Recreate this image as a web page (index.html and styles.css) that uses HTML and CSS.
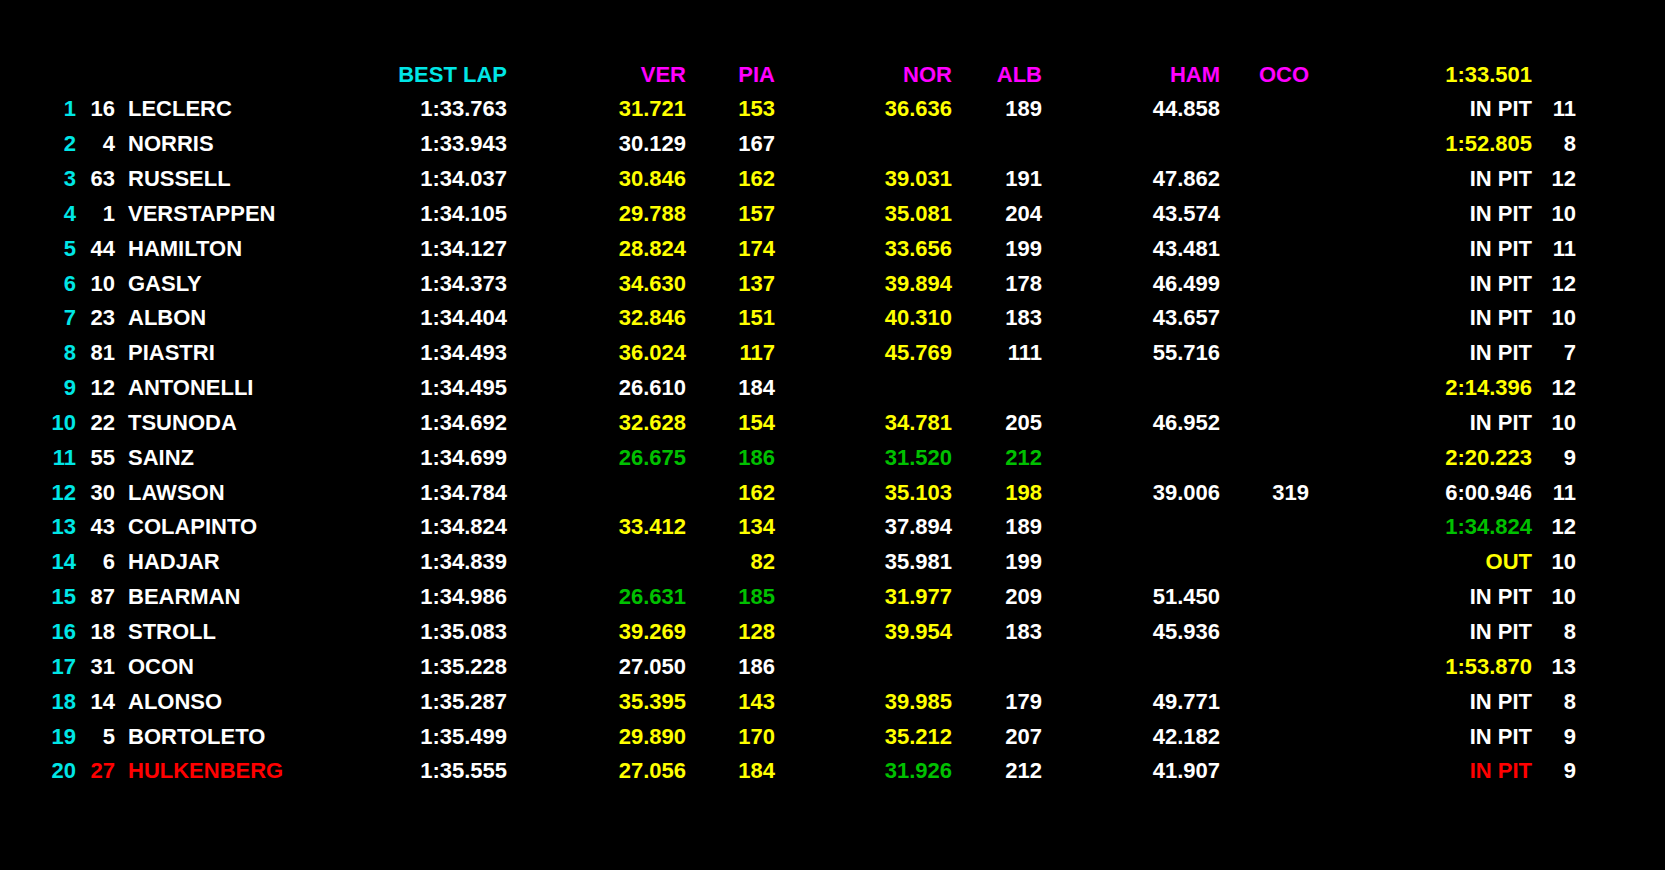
FILE: index.html
```html
<!DOCTYPE html>
<html>
<head>
<meta charset="utf-8">
<link rel="stylesheet" href="styles.css">
</head>
<body>
<div class="board">
  <div class="row head">
    <span></span><span></span><span></span>
    <span class="c-best cy">BEST LAP</span>
    <span class="mg">VER</span><span class="mg">PIA</span>
    <span class="mg">NOR</span><span class="mg">ALB</span>
    <span class="mg">HAM</span><span class="mg">OCO</span>
    <span class="ye">1:33.501</span><span></span>
  </div>
  <div class="row"><span class="cy">1</span><span>16</span><span class="name">LECLERC</span><span>1:33.763</span><span class="ye">31.721</span><span class="ye">153</span><span class="ye">36.636</span><span>189</span><span>44.858</span><span></span><span>IN PIT</span><span>11</span></div>
  <div class="row"><span class="cy">2</span><span>4</span><span class="name">NORRIS</span><span>1:33.943</span><span>30.129</span><span>167</span><span></span><span></span><span></span><span></span><span class="ye">1:52.805</span><span>8</span></div>
  <div class="row"><span class="cy">3</span><span>63</span><span class="name">RUSSELL</span><span>1:34.037</span><span class="ye">30.846</span><span class="ye">162</span><span class="ye">39.031</span><span>191</span><span>47.862</span><span></span><span>IN PIT</span><span>12</span></div>
  <div class="row"><span class="cy">4</span><span>1</span><span class="name">VERSTAPPEN</span><span>1:34.105</span><span class="ye">29.788</span><span class="ye">157</span><span class="ye">35.081</span><span>204</span><span>43.574</span><span></span><span>IN PIT</span><span>10</span></div>
  <div class="row"><span class="cy">5</span><span>44</span><span class="name">HAMILTON</span><span>1:34.127</span><span class="ye">28.824</span><span class="ye">174</span><span class="ye">33.656</span><span>199</span><span>43.481</span><span></span><span>IN PIT</span><span>11</span></div>
  <div class="row"><span class="cy">6</span><span>10</span><span class="name">GASLY</span><span>1:34.373</span><span class="ye">34.630</span><span class="ye">137</span><span class="ye">39.894</span><span>178</span><span>46.499</span><span></span><span>IN PIT</span><span>12</span></div>
  <div class="row"><span class="cy">7</span><span>23</span><span class="name">ALBON</span><span>1:34.404</span><span class="ye">32.846</span><span class="ye">151</span><span class="ye">40.310</span><span>183</span><span>43.657</span><span></span><span>IN PIT</span><span>10</span></div>
  <div class="row"><span class="cy">8</span><span>81</span><span class="name">PIASTRI</span><span>1:34.493</span><span class="ye">36.024</span><span class="ye">117</span><span class="ye">45.769</span><span>111</span><span>55.716</span><span></span><span>IN PIT</span><span>7</span></div>
  <div class="row"><span class="cy">9</span><span>12</span><span class="name">ANTONELLI</span><span>1:34.495</span><span>26.610</span><span>184</span><span></span><span></span><span></span><span></span><span class="ye">2:14.396</span><span>12</span></div>
  <div class="row"><span class="cy">10</span><span>22</span><span class="name">TSUNODA</span><span>1:34.692</span><span class="ye">32.628</span><span class="ye">154</span><span class="ye">34.781</span><span>205</span><span>46.952</span><span></span><span>IN PIT</span><span>10</span></div>
  <div class="row"><span class="cy">11</span><span>55</span><span class="name">SAINZ</span><span>1:34.699</span><span class="gr">26.675</span><span class="gr">186</span><span class="gr">31.520</span><span class="gr">212</span><span></span><span></span><span class="ye">2:20.223</span><span>9</span></div>
  <div class="row"><span class="cy">12</span><span>30</span><span class="name">LAWSON</span><span>1:34.784</span><span></span><span class="ye">162</span><span class="ye">35.103</span><span class="ye">198</span><span>39.006</span><span>319</span><span>6:00.946</span><span>11</span></div>
  <div class="row"><span class="cy">13</span><span>43</span><span class="name">COLAPINTO</span><span>1:34.824</span><span class="ye">33.412</span><span class="ye">134</span><span>37.894</span><span>189</span><span></span><span></span><span class="gr">1:34.824</span><span>12</span></div>
  <div class="row"><span class="cy">14</span><span>6</span><span class="name">HADJAR</span><span>1:34.839</span><span></span><span class="ye">82</span><span>35.981</span><span>199</span><span></span><span></span><span class="ye">OUT</span><span>10</span></div>
  <div class="row"><span class="cy">15</span><span>87</span><span class="name">BEARMAN</span><span>1:34.986</span><span class="gr">26.631</span><span class="gr">185</span><span class="ye">31.977</span><span>209</span><span>51.450</span><span></span><span>IN PIT</span><span>10</span></div>
  <div class="row"><span class="cy">16</span><span>18</span><span class="name">STROLL</span><span>1:35.083</span><span class="ye">39.269</span><span class="ye">128</span><span class="ye">39.954</span><span>183</span><span>45.936</span><span></span><span>IN PIT</span><span>8</span></div>
  <div class="row"><span class="cy">17</span><span>31</span><span class="name">OCON</span><span>1:35.228</span><span>27.050</span><span>186</span><span></span><span></span><span></span><span></span><span class="ye">1:53.870</span><span>13</span></div>
  <div class="row"><span class="cy">18</span><span>14</span><span class="name">ALONSO</span><span>1:35.287</span><span class="ye">35.395</span><span class="ye">143</span><span class="ye">39.985</span><span>179</span><span>49.771</span><span></span><span>IN PIT</span><span>8</span></div>
  <div class="row"><span class="cy">19</span><span>5</span><span class="name">BORTOLETO</span><span>1:35.499</span><span class="ye">29.890</span><span class="ye">170</span><span class="ye">35.212</span><span>207</span><span>42.182</span><span></span><span>IN PIT</span><span>9</span></div>
  <div class="row"><span class="cy">20</span><span class="rd">27</span><span class="name rd">HULKENBERG</span><span>1:35.555</span><span class="ye">27.056</span><span class="ye">184</span><span class="gr">31.926</span><span>212</span><span>41.907</span><span></span><span class="rd">IN PIT</span><span>9</span></div>
</div>
</body>
</html>
```

FILE: styles.css
```css
html, body {
  margin: 0;
  padding: 0;
  background: #000;
}
body {
  width: 1665px;
  height: 870px;
  overflow: hidden;
  font-family: "Liberation Sans", Arial, sans-serif;
  font-weight: bold;
  font-size: 22px;
  color: #fff;
}
.board {
  padding-top: 57.5px;
}
.row {
  display: grid;
  grid-template-columns: 76px 39px 280px 112px 179px 89px 177px 90px 178px 89px 223px 44px;
  height: 34.85px;
  line-height: 34.85px;
  white-space: nowrap;
}
.row > span {
  text-align: right;
}
.row > span.name {
  text-align: left;
  padding-left: 13px;
}
.cy { color: #00e6e6; }
.mg { color: #ff00ff; }
.ye { color: #ffff00; }
.gr { color: #00c000; }
.rd { color: #ff0000; }
```
